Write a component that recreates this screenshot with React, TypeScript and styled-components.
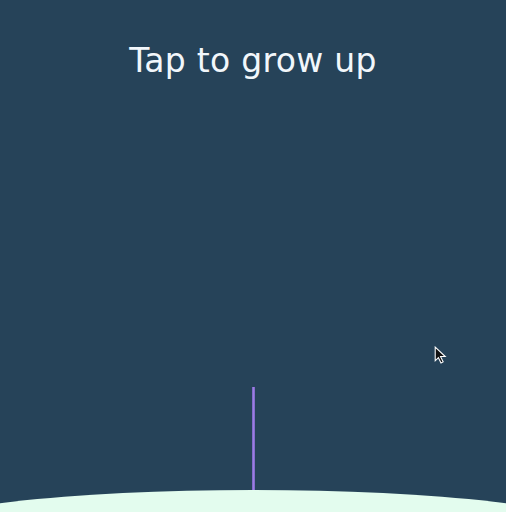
import React from "react";
import styled, { createGlobalStyle } from "styled-components";

const Global = createGlobalStyle`
  html, body { margin: 0; padding: 0; background: #264359; }
  body { overflow: hidden; }
`;

const Scene = styled.div`
  position: relative;
  width: 506px;
  height: 512px;
  background: #264359;
  overflow: hidden;
  display: flex;
  flex-direction: column;
  align-items: center;
`;

const Title = styled.h1`
  margin: 0;
  padding-top: 41px;
  font-family: "DejaVu Sans", sans-serif;
  font-weight: normal;
  font-size: 33px;
  line-height: 40px;
  color: #f2f7fb;
  letter-spacing: 0.3px;
`;

const Spacer = styled.div`
  flex: 1;
`;

const Stem = styled.div<{ $height: number }>`
  width: 3px;
  height: ${(p) => p.$height}px;
  background: linear-gradient(90deg, #7a5fc4, #9a80e0, #7a5fc4);
  flex-shrink: 0;
`;

const Ground = styled.div`
  flex-shrink: 0;
  width: 680px;
  height: 80px;
  margin-bottom: -58px;
  border-radius: 50%;
  background: #e3fcee;
`;

const Cursor = styled.svg`
  position: absolute;
  left: 434px;
  top: 346px;
`;

export default function App() {
  return (
    <>
      <Global />
      <Scene>
        <Title>Tap to grow up</Title>
        <Spacer />
        <Stem $height={103} />
        <Ground />
        <Cursor width="13" height="18" viewBox="0 0 12 17">
          <path d="M1 1 L1 14 L4 11 L6.5 16 L8.5 15 L6 10 L10.5 10 Z" fill="#111" stroke="#fff" strokeWidth="1" />
        </Cursor>
      </Scene>
    </>
  );
}
